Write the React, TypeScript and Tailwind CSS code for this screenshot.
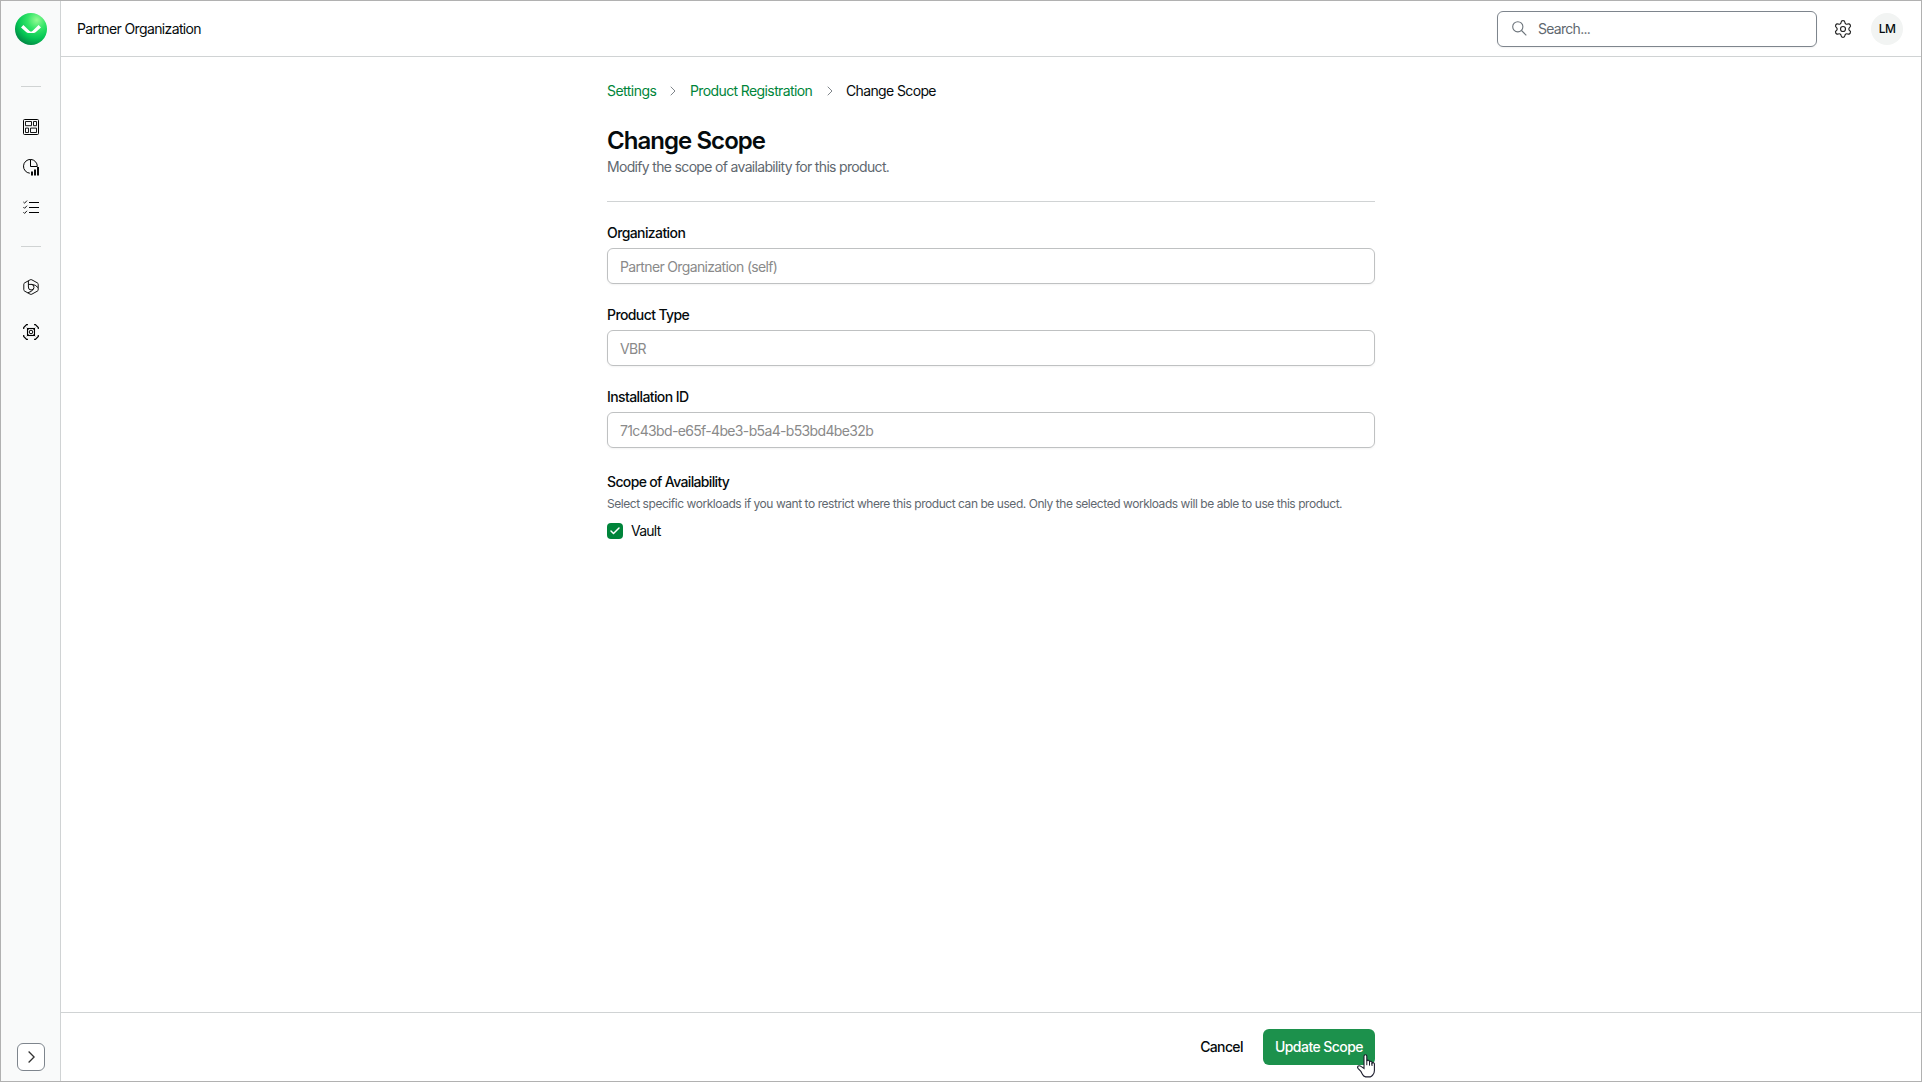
import { Check, ChevronRight, Settings } from "lucide-react";

const fields = [
  { label: "Organization", value: "Partner Organization (self)" },
  { label: "Product Type", value: "VBR" },
  { label: "Installation ID", value: "71c43bd-e65f-4be3-b5a4-b53bd4be32b" },
];

function Logo() {
  return (
    <svg width="32" height="32" viewBox="0 0 32 32">
      <defs>
        <radialGradient id="logo-fill" cx="0.68" cy="0.22" r="0.82">
          <stop offset="0" stopColor="#93fb93" />
          <stop offset="0.35" stopColor="#34e568" />
          <stop offset="0.7" stopColor="#06c755" />
          <stop offset="1" stopColor="#018a45" />
        </radialGradient>
      </defs>
      <circle cx="16" cy="16" r="16" fill="url(#logo-fill)" />
      <path d="M8.4 12 14.6 18Q16 19 17.4 18L23.6 12 26 14.4 20.6 19.2Q19.8 19.9 18.8 19.9H13.2Q12.2 19.9 11.4 19.2L6 14.4Z" fill="#fff" />
    </svg>
  );
}

function DashboardIcon() {
  return (
    <svg width="16" height="16" viewBox="0 0 16 16" fill="none" stroke="#000">
      <rect x="0.5" y="0.5" width="15" height="15" rx="1" />
      <path d="M2.5 2.5h6v4.2h-6zM10.5 2.5h3v4.2h-3zM2.5 9.1h3v4.4h-3zM7.5 9.1h6v4.4h-6z" strokeWidth="0.9" />
    </svg>
  );
}

function ReportsIcon() {
  return (
    <svg width="17" height="17" viewBox="0 0 17 17" fill="none" stroke="#000">
      <path d="M6.8 14.2A6.9 6.9 0 1 1 14.3 7.5H7.5V.6" />
      <path d="M9 12.5v4M12 10.5v6M15 8v8.5" strokeWidth="1.9" />
    </svg>
  );
}

function TasksIcon() {
  return (
    <svg width="16" height="16" viewBox="0 0 16 16" fill="none" stroke="#000">
      <path d="M6 3.5h10M6 8.5h10M6 13.5h10" />
      <path d="M.4 3l1.2 1.2L4 1.6M.4 8.1l1.2 1.2L4 6.7M.4 13.2l1.2 1.2L4 11.8" strokeWidth="0.9" />
    </svg>
  );
}

function WorkloadsIcon() {
  return (
    <svg width="16" height="16" viewBox="0 0 16 16" fill="none" stroke="#111" strokeLinejoin="round">
      <path d="M7.2.8Q8 .3 8.8.8L14.4 3.9Q15.2 4.3 15.2 5.2V10.8Q15.2 11.7 14.4 12.1L8.8 15.2Q8 15.7 7.2 15.2L1.6 12.1Q.8 11.7.8 10.8V5.2Q.8 4.3 1.6 3.9Z" />
      <path d="M5.4 1.9V8A2.8 2.8 0 1 0 8.2 5.4M5.4 5.4H8.6Q12.6 5.5 15 8.6M10.6 9.6Q9.3 12.8 4.8 13.8" />
    </svg>
  );
}

function ProtectionIcon() {
  return (
    <svg width="16" height="16" viewBox="0 0 16 16" fill="none" stroke="#000" strokeWidth="1.2">
      <path d="M.7 4.9V3.6L3.6.7H4.9M11.1.7h1.3l2.9 2.9v1.3M15.3 11.1v1.3l-2.9 2.9h-1.3M4.9 15.3H3.6L.7 12.4v-1.3" />
      <rect x="4.5" y="4.5" width="7" height="7" strokeWidth="1.1" />
      <circle cx="8" cy="8" r="1.8" strokeWidth="1" />
      <path d="M3.8 3.8l1.8 1.8M12.2 3.8l-1.8 1.8M3.8 12.2l1.8-1.8M12.2 12.2l-1.8-1.8" strokeWidth="0.9" />
    </svg>
  );
}

function SearchIcon() {
  return (
    <svg width="15" height="15" viewBox="0 0 15 15" fill="none" stroke="#6c747b" strokeWidth="1.1">
      <circle cx="5.8" cy="5.8" r="5.1" />
      <path d="m9.5 9.5 4.8 4.8" />
    </svg>
  );
}

function HandCursor() {
  return (
    <svg className="absolute left-[94px] top-[25px]" width="18" height="24" viewBox="0 0 18 24">
      <path
        d="M7 14.5V2.2Q7 .7 8.4 .7T9.8 2.2V7Q10.2 6 11.3 6.2T12.5 7.6V8Q12.9 7 14 7.3T15 8.7V9.1Q15.6 8.2 16.6 8.8T17.4 10.4V16.5Q17.4 19 16 20.6 15 22.2 13.2 22.9H8.6Q6.4 22.3 5.4 20.2L3.9 17.4 1 14.3Q.1 12.9 1.3 12 2.6 11.3 4 12.4Z"
        fill="#fff"
        stroke="#1b1b2b"
        strokeWidth="1.1"
      />
      <path d="M9.8 6.8v4.4M12.5 7.8v3.8M15 8.8v3.2" stroke="#1b1b2b" strokeWidth="1" />
    </svg>
  );
}

function Sidebar() {
  return (
    <aside className="flex w-15 shrink-0 flex-col items-center border-r border-[#d0d3d4] bg-[#f9fafa] pt-3 pr-px pb-[10px] pl-[2px]">
      <Logo />
      <div className="mt-[41px] h-px w-5 bg-[#d0d3d3]" />
      <nav className="mt-8 flex flex-col items-center">
        <DashboardIcon />
        <div className="mt-6 -mr-px"><ReportsIcon /></div>
        <div className="mt-[23px]"><TasksIcon /></div>
      </nav>
      <div className="mt-[31px] h-px w-5 bg-[#d0d3d3]" />
      <nav className="mt-8 flex flex-col items-center gap-[29px]">
        <WorkloadsIcon />
        <ProtectionIcon />
      </nav>
      <button className="mt-auto flex size-7 items-center justify-center rounded-md border border-[#7e858d] bg-white pl-px">
        <svg width="7" height="12" viewBox="0 0 7 12" fill="none" stroke="#333" strokeWidth="1.3">
          <path d="M.6.5 6.1 6 .6 11.5" />
        </svg>
      </button>
    </aside>
  );
}

function Header() {
  return (
    <header className="flex h-14 shrink-0 items-center border-b border-[#d0d3d4] pr-[18px] pl-4 text-sm">
      <span className="tracking-[-0.63px]">Partner Organization</span>
      <div className="ml-auto flex h-9 w-80 items-center rounded-md border border-[#7e858d] pl-[14px] text-[#5f686f] shadow-[0_1px_2px_rgba(0,0,0,0.06)]">
        <SearchIcon />
        <span className="ml-[11px] tracking-[-0.72px]">Search...</span>
      </div>
      <button className="ml-4 flex size-5 items-center justify-center">
        <Settings size={20} strokeWidth={1.4} color="#222" />
      </button>
      <div className="ml-[18px] flex size-8 items-center justify-center rounded-full bg-[#f2f4f3] text-xs font-medium tracking-[-0.5px]">
        LM
      </div>
    </header>
  );
}

export default function App() {
  return (
    <div className="flex h-[1082px] w-[1922px] border border-[#b1b1b1] bg-white font-['Inter','Liberation_Sans',sans-serif] text-[#050b0d]">
      <Sidebar />

      <div className="flex min-w-0 flex-1 flex-col">
        <Header />

        <main className="mx-auto w-3xl flex-1 pt-6">
          <nav className="flex h-5 items-center text-sm tracking-[-0.63px]">
            <a className="w-[50px] tracking-[-0.53px] text-[#00853a]">Settings</a>
            <ChevronRight size={16} strokeWidth={1.5} className="mr-[9px] ml-2 text-[#80868b]" />
            <a className="w-[124px] tracking-[-0.61px] text-[#00853a]">Product Registration</a>
            <ChevronRight size={16} strokeWidth={1.5} className="mx-2 text-[#80868b]" />
            <span>Change Scope</span>
          </nav>

          <div className="mt-6 border-b border-[#d0d3d4] pb-6">
            <h1 className="text-2xl leading-8 font-semibold tracking-[-0.95px]">Change Scope</h1>
            <p className="text-sm tracking-[-0.67px] text-[#5f686f]">
              Modify the scope of availability for this product.
            </p>
          </div>

          <div className="mt-[21px] space-y-[21px]">
            {fields.map((f) => (
              <div key={f.label}>
                <label className="block text-sm font-medium tracking-[-0.6px]">{f.label}</label>
                <div className="mt-[5px] flex h-9 items-center rounded-md border border-[#bfc1c2] pt-0.5 pl-3 text-sm tracking-[-0.65px] text-[#8a8a8a] shadow-[0_1px_2px_rgba(0,0,0,0.05)]">
                  {f.value}
                </div>
              </div>
            ))}
          </div>

          <section className="mt-6">
            <h2 className="text-sm font-medium tracking-[-0.65px]">Scope of Availability</h2>
            <p className="mt-1 text-xs tracking-[-0.45px] text-[#5f686f]">
              Select specific workloads if you want to restrict where this product can be used. Only the selected
              workloads will be able to use this product.
            </p>
            <label className="mt-[9px] flex h-5 items-center gap-2 text-sm tracking-[-0.75px]">
              <span className="flex size-4 items-center justify-center rounded bg-[#00843a] text-white">
                <Check size={12} strokeWidth={3} />
              </span>
              Vault
            </label>
          </section>
        </main>

        <footer className="h-[69px] shrink-0 border-t border-[#d0d3d4] pt-4">
          <div className="mx-auto flex w-3xl justify-end gap-2 text-sm font-medium">
            <button className="h-9 w-[67px] tracking-[-0.65px]">Cancel</button>
            <button className="relative h-9 w-28 rounded-md bg-[#1c914c] tracking-[-0.55px] text-white">
              Update Scope
              <HandCursor />
            </button>
          </div>
        </footer>
      </div>
    </div>
  );
}
